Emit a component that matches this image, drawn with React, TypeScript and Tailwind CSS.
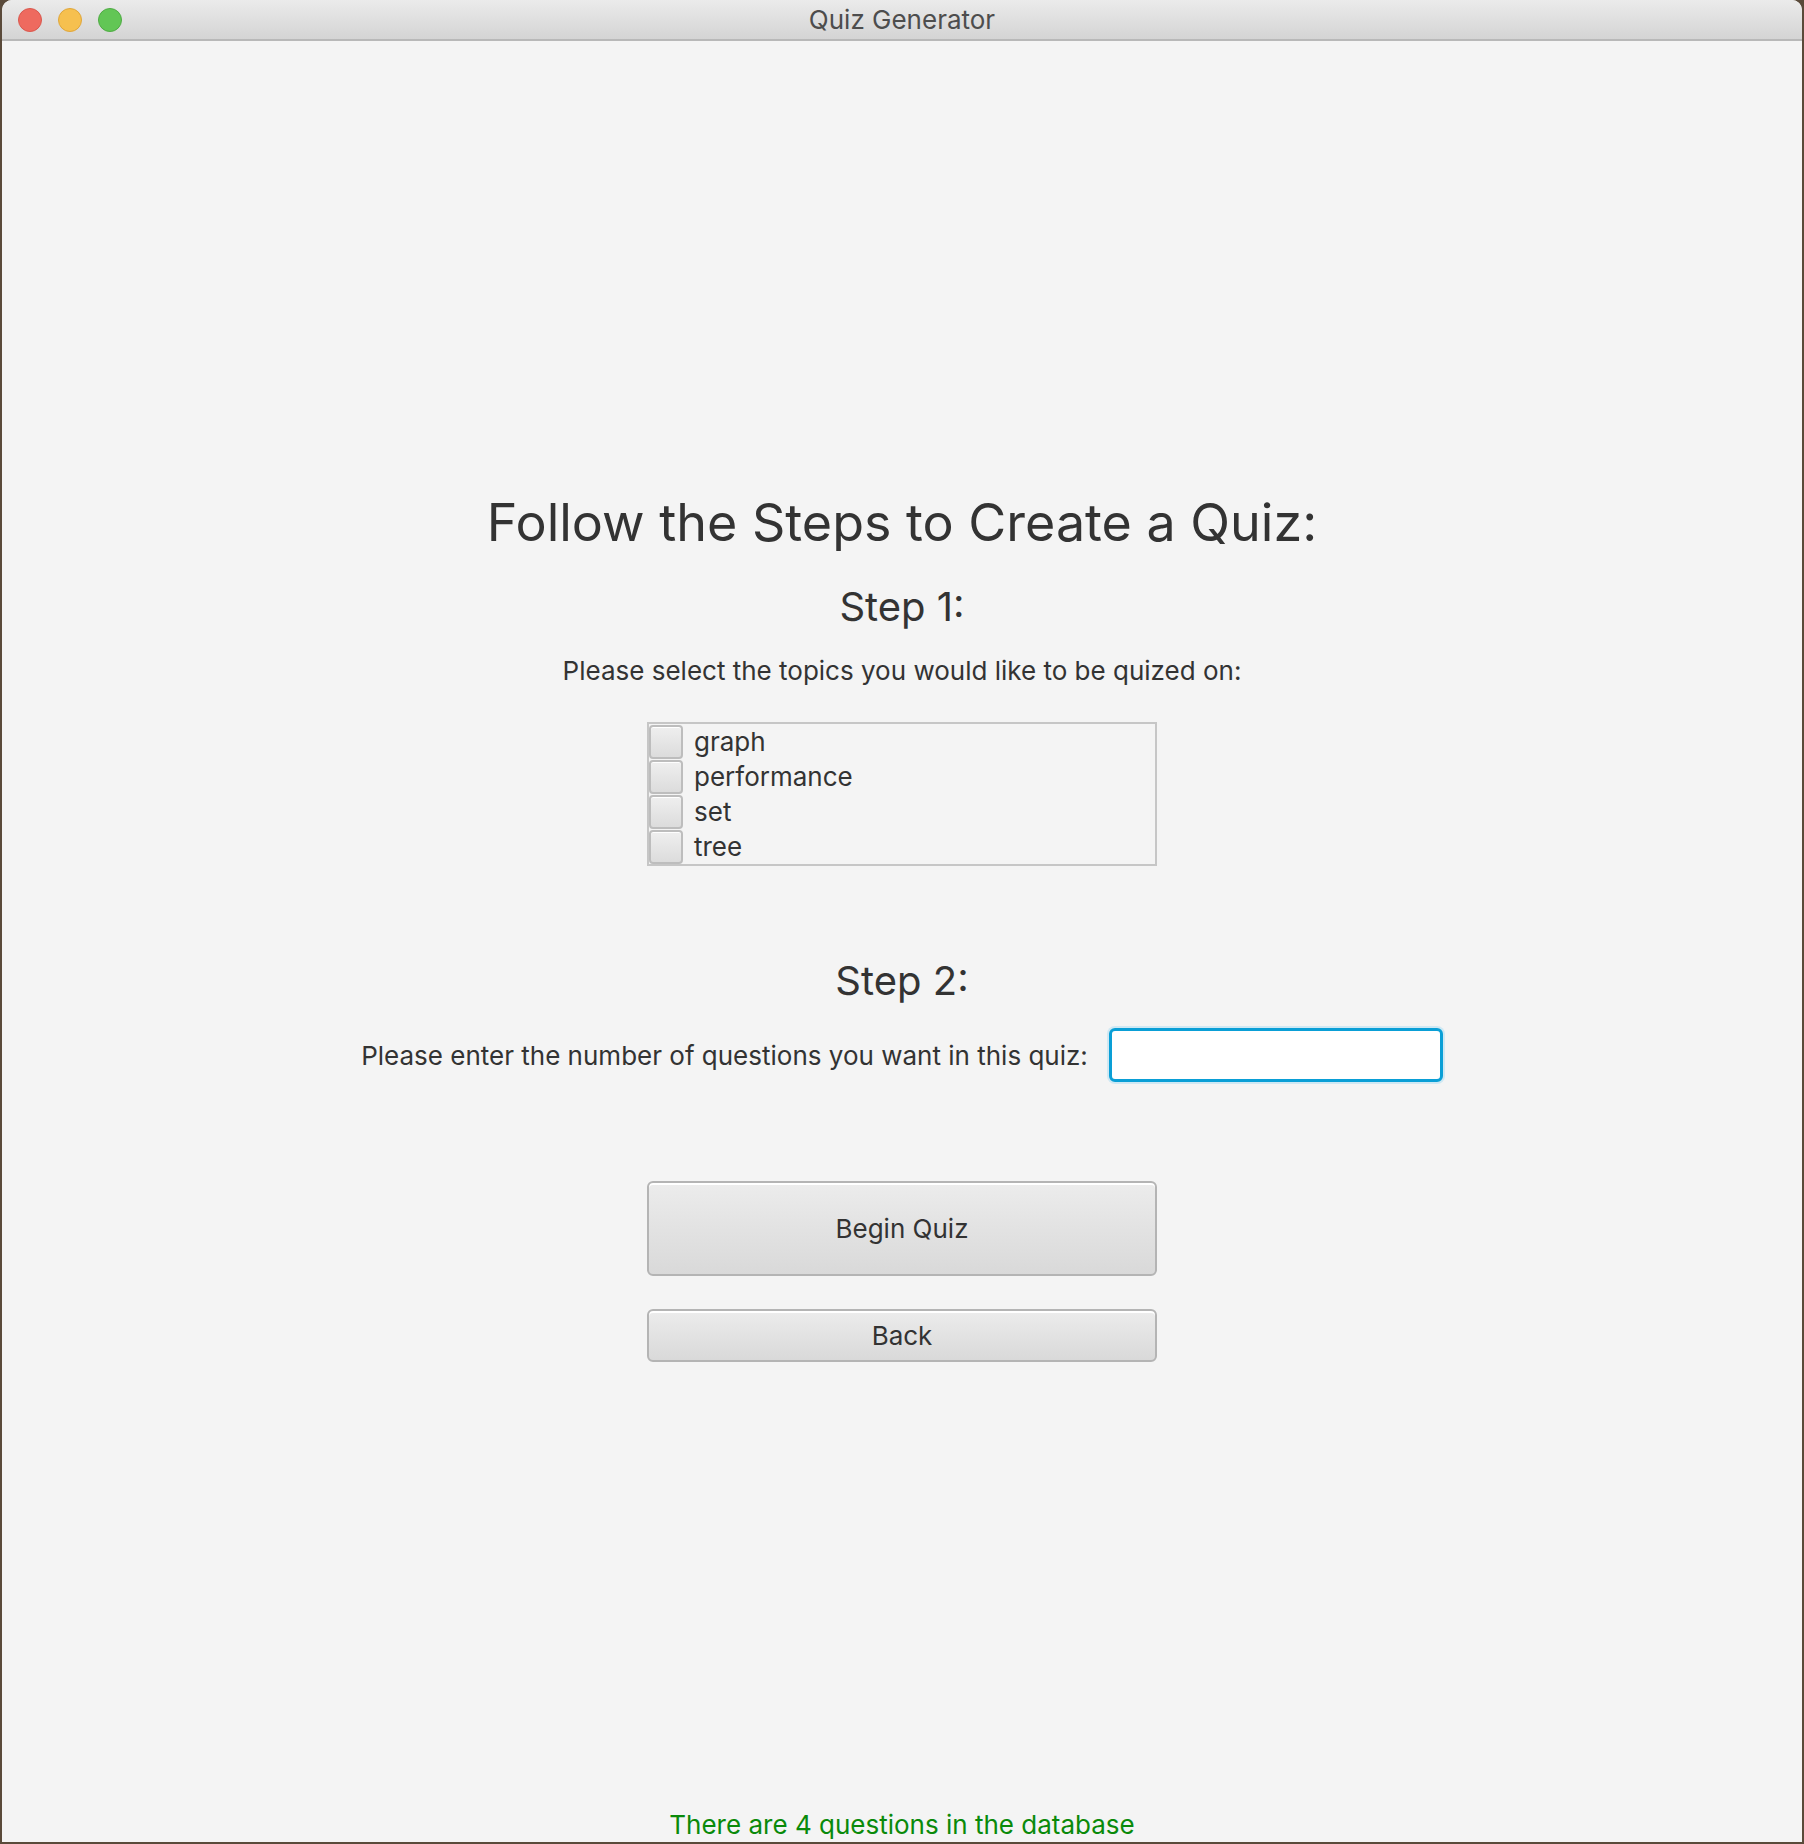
import React, { useState } from 'react';

const topics = ['graph', 'performance', 'set', 'tree'];

function TopicRow({ label, checked, onToggle }: { label: string; checked: boolean; onToggle: () => void }) {
    return (
        <label className="flex items-center h-[35px] shrink-0 cursor-pointer select-none">
            <span
                onClick={onToggle}
                className="w-[34px] h-[34px] rounded-[4px] border-2 border-[#bdbdbd] bg-gradient-to-b from-[#efefef] to-[#dcdcdc] shadow-[inset_0_1px_0_#ffffff] flex items-center justify-center text-[#333] text-[22px]"
            >
                {checked ? '✓' : ''}
            </span>
            <span className="ml-[11px] text-[26px] text-[#333] leading-none">{label}</span>
        </label>
    );
}

export default function App() {
    const [selected, setSelected] = useState<string[]>([]);
    const [count, setCount] = useState('');

    const toggle = (t: string) =>
        setSelected((s) => (s.includes(t) ? s.filter((x) => x !== t) : [...s, t]));

    return (
        <div className="w-[1804px] h-[1844px] bg-[#5a4a3a] flex flex-col font-['Inter',sans-serif]">
            <div className="flex-1 flex flex-col mx-[2px] mb-[2px] bg-[#f4f4f4] rounded-t-[10px] overflow-hidden">
                {/* title bar */}
                <div className="relative h-[41px] flex items-center justify-center bg-gradient-to-b from-[#ebebeb] to-[#d4d4d4] border-b-2 border-[#b8b8b8]">
                    <div className="absolute left-[16px] top-[8px] flex gap-[16px]">
                        <span className="w-[24px] h-[24px] rounded-full bg-[#ee6a5f] border border-[#d9584e]" />
                        <span className="w-[24px] h-[24px] rounded-full bg-[#f6c04f] border border-[#dfa63b]" />
                        <span className="w-[24px] h-[24px] rounded-full bg-[#62c655] border border-[#4fab44]" />
                    </div>
                    <span className="text-[26px] text-[#4d4d4d]">Quiz Generator</span>
                </div>

                <div className="flex-1 flex flex-col items-center pt-[451px] text-[#333]">
                    <h1 className="text-[52px] leading-[62px]">Follow the Steps to Create a Quiz:</h1>
                    <h2 className="mt-[30px] text-[40px] leading-[46px]">Step 1:</h2>
                    <p className="mt-[25px] text-[26px] leading-[32px]">Please select the topics you would like to be quized on:</p>

                    <div className="mt-[35px] w-[510px] border-2 border-[#c6c6c6] flex flex-col">
                        {topics.map((t) => (
                            <TopicRow key={t} label={t} checked={selected.includes(t)} onToggle={() => toggle(t)} />
                        ))}
                    </div>

                    <h2 className="mt-[92px] text-[40px] leading-[46px]">Step 2:</h2>
                    <div className="mt-[24px] flex items-center gap-[21px]">
                        <span className="text-[26px]">Please enter the number of questions you want in this quiz:</span>
                        <input
                            value={count}
                            onChange={(e) => setCount(e.target.value)}
                            className="w-[334px] h-[54px] bg-white border-[3px] border-[#0a9fd6] rounded-[6px] shadow-[0_0_0_2px_#cfe8f3] outline-none px-3 text-[26px]"
                        />
                    </div>

                    <button className="mt-[99px] w-[510px] h-[95px] rounded-[6px] border-2 border-[#b4b4b4] bg-gradient-to-b from-[#ececec] to-[#d9d9d9] shadow-[inset_0_2px_0_#ffffff] text-[26px] text-[#333]">
                        Begin Quiz
                    </button>
                    <button className="mt-[33px] w-[510px] h-[53px] rounded-[6px] border-2 border-[#b4b4b4] bg-gradient-to-b from-[#ececec] to-[#d9d9d9] shadow-[inset_0_2px_0_#ffffff] text-[26px] text-[#333]">
                        Back
                    </button>
                </div>

                <p className="text-center text-[26px] leading-[32px] text-[#0a8a0a] pb-[1px]">
                    There are {4} questions in the database
                </p>
            </div>
        </div>
    );
}
